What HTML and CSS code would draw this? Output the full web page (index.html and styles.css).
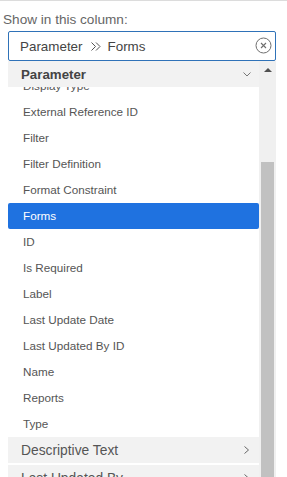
FILE: index.html
```html
<!DOCTYPE html>
<html lang="en">
<head>
  <meta charset="UTF-8" />
  <meta name="viewport" content="width=device-width, initial-scale=1.0"/>
  <title>Column Picker</title>
  <link rel="stylesheet" href="styles.css">
</head>
<body>
  <div class="picker">
    <div class="caption">Show in this column:</div>
    <div class="search">
      <span class="crumb">Parameter</span>
      <svg class="sep" width="10" height="9" viewBox="0 0 10 9">
        <path d="M0.5 0.5 L4.5 4.5 L0.5 8.5 M5 0.5 L9 4.5 L5 8.5" stroke="#555" stroke-width="1" fill="none"/>
      </svg>
      <span class="crumb">Forms</span>
      <span class="clear">
        <svg width="17" height="17" viewBox="0 0 17 17">
          <circle cx="8.5" cy="8.5" r="7.5" fill="none" stroke="#6f6f6f" stroke-width="1"/>
          <path d="M6 6 L11 11 M11 6 L6 11" stroke="#6f6f6f" stroke-width="1.1" fill="none"/>
        </svg>
      </span>
    </div>

    <div class="panel">
      <div class="list">
        <div class="group-head open">
          <span>Parameter</span>
          <svg class="chev" width="8" height="5" viewBox="0 0 8 5">
            <path d="M0.5 0.5 L4 4 L7.5 0.5" stroke="#777" stroke-width="1" fill="none"/>
          </svg>
        </div>
        <div class="viewport">
          <ul class="items">
            <li>Display Type</li>
            <li>External Reference ID</li>
            <li>Filter</li>
            <li>Filter Definition</li>
            <li>Format Constraint</li>
            <li class="selected">Forms</li>
            <li>ID</li>
            <li>Is Required</li>
            <li>Label</li>
            <li>Last Update Date</li>
            <li>Last Updated By ID</li>
            <li>Name</li>
            <li>Reports</li>
            <li>Type</li>
          </ul>
          <div class="group-head">
            <span>Descriptive Text</span>
            <svg class="chev" width="6" height="8" viewBox="0 0 6 8">
              <path d="M0.5 0.5 L4.5 4 L0.5 7.5" stroke="#666" stroke-width="1" fill="none"/>
            </svg>
          </div>
          <div class="group-head">
            <span>Last Updated By</span>
            <svg class="chev" width="6" height="8" viewBox="0 0 6 8">
              <path d="M0.5 0.5 L4.5 4 L0.5 7.5" stroke="#666" stroke-width="1" fill="none"/>
            </svg>
          </div>
        </div>
      </div>
      <div class="scrollbar">
        <div class="arrow"></div>
        <div class="thumb"></div>
      </div>
    </div>
  </div>
</body>
</html>
```

FILE: styles.css
```css
html, body {
  height: 100%;
}

body {
  margin: 0;
  background-color: white;
  font-family: 'Liberation Sans', Arial, sans-serif;
  color: #555;
  border-top: 1px solid #dcdcdc;
  box-sizing: border-box;
  overflow: hidden;
}

.picker {
  display: flex;
  flex-direction: column;
  height: 100%;
  padding-right: 11px;
}

.caption {
  margin: 11px 0 0 3px;
  font-size: 13.6px;
  line-height: 16px;
  color: #666;
}

.search {
  display: flex;
  align-items: center;
  margin: 3px 0 0 8px;
  height: 30px;
  padding: 0 2px 0 11px;
  border: 1px solid #2f72b8;
  border-radius: 2px;
  box-sizing: border-box;
  font-size: 13.4px;
  color: #444;
}

.search .sep {
  margin: 0 7px 0 8px;
}

.clear {
  margin-left: auto;
  display: flex;
  padding: 0 1px 1px 0;
}

.panel {
  display: flex;
  flex: 1;
  min-height: 0;
  margin-left: 8px;
}

.list {
  flex: 1;
  display: flex;
  flex-direction: column;
  min-width: 0;
}

.group-head {
  display: flex;
  align-items: center;
  justify-content: space-between;
  height: 26px;
  padding: 0 9px 0 13px;
  background-color: #f2f2f2;
  font-size: 13.8px;
  color: #555;
  flex-shrink: 0;
}

.group-head + .group-head {
  margin-top: 2px;
}

.group-head.open {
  font-weight: bold;
  font-size: 13.3px;
  color: #444;
  padding-right: 8px;
}

.viewport {
  flex: 1;
  overflow: hidden;
}

.items {
  list-style: none;
  margin: -14px 0 0;
  padding: 0;
}

.items li {
  height: 26px;
  line-height: 26px;
  padding-left: 15px;
  font-size: 11.7px;
  color: #555;
}

.items li.selected {
  background-color: #1f72e0;
  color: white;
  border-radius: 2px;
}

.scrollbar {
  width: 17px;
  flex-shrink: 0;
  background-color: #f0f0f0;
  display: flex;
  flex-direction: column;
  align-items: center;
}

.arrow {
  width: 0;
  height: 0;
  margin-top: 7px;
  border-left: 4px solid transparent;
  border-right: 4px solid transparent;
  border-bottom: 4px solid #505050;
}

.thumb {
  width: 13px;
  flex: 1;
  margin-top: 90px;
  background-color: #c1c1c1;
}
```
